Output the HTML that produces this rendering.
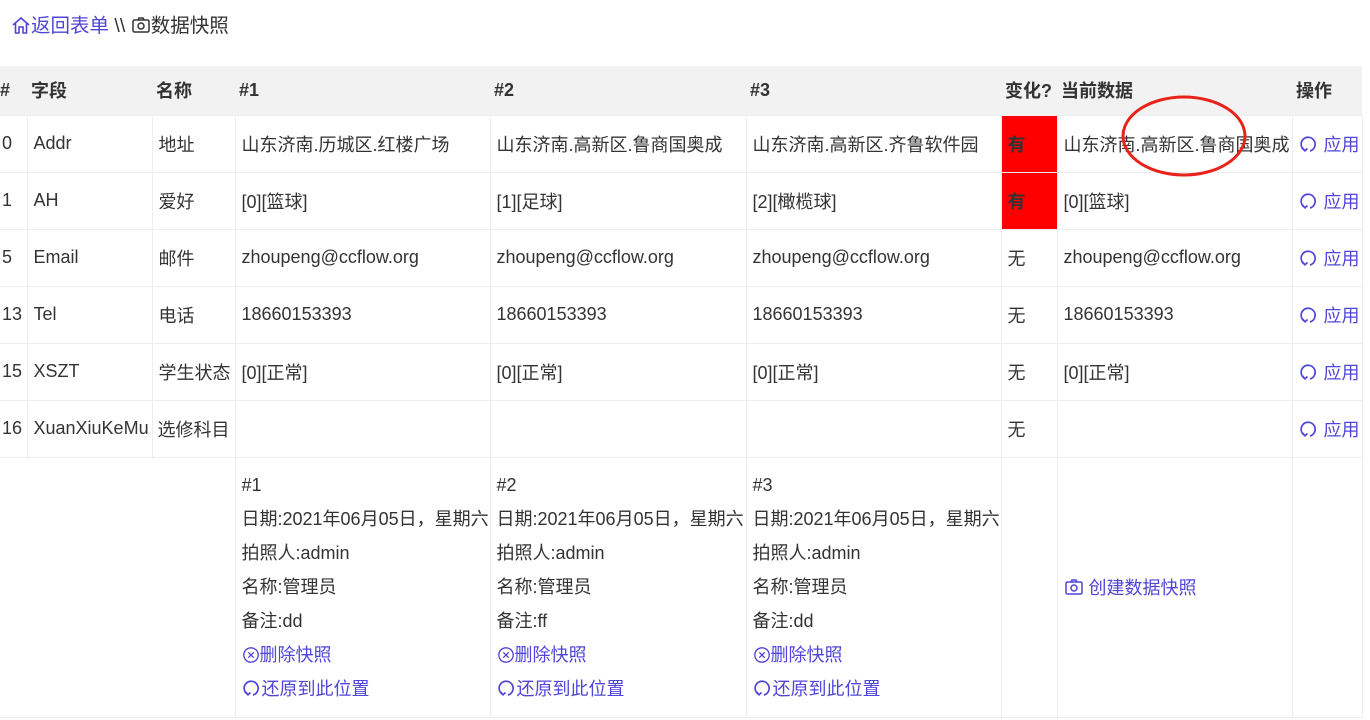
<!DOCTYPE html>
<html><head><meta charset="utf-8">
<style>
*{margin:0;padding:0;box-sizing:border-box}
body{width:1370px;height:720px;background:#fff;font-family:"Liberation Sans","Noto Sans CJK SC",sans-serif;font-size:18px;color:#333;position:relative;overflow:hidden}
.top{position:absolute;left:11px;top:13px;font-size:19.5px;line-height:26px;white-space:nowrap}
a{color:#4f46d8;text-decoration:none}
table{position:absolute;left:0;top:66px;width:1362px;border-collapse:collapse;table-layout:fixed}
th{background:#f2f2f2;height:49px;text-align:left;font-weight:bold;font-size:18px;padding-left:4px;white-space:nowrap}
td{height:57px;border:1px solid #eee;padding-left:6px;white-space:nowrap;overflow:hidden;vertical-align:middle}
td:first-child{padding-left:2px;border-left:none}
.red{background:#ff0000;font-weight:bold}
.snap{vertical-align:top;padding-top:15px}
.snap div{height:34px;line-height:24px}
svg{vertical-align:-3px}
</style></head><body>
<div class="top"><a><svg width="20" height="20" viewBox="0 0 20 20" fill="none" stroke="#4f46d8" stroke-width="1.6"><path d="M2 10 L10 3 L18 10 M4.5 8 V18 H8 V12 H12 V18 H15.5 V8"/></svg>返回表单</a> \\ <svg width="20" height="20" viewBox="0 0 20 20" fill="none" stroke="#333" stroke-width="1.5"><rect x="2" y="5" width="16" height="12" rx="1.5"/><path d="M7 5 L8 3 H12 L13 5"/><circle cx="10" cy="11" r="3"/></svg>数据快照</div>
<table>
<colgroup><col style="width:27px"><col style="width:125px"><col style="width:83px"><col style="width:255px"><col style="width:256px"><col style="width:255px"><col style="width:56px"><col style="width:235px"><col style="width:70px"></colgroup>
<tr><th style="padding-left:0">#</th><th>字段</th><th>名称</th><th>#1</th><th>#2</th><th>#3</th><th>变化?</th><th>当前数据</th><th>操作</th></tr>
<tr><td>0</td><td>Addr</td><td>地址</td><td>山东济南.历城区.红楼广场</td><td>山东济南.高新区.鲁商国奥成</td><td>山东济南.高新区.齐鲁软件园</td><td class="red">有</td><td>山东济南.高新区.鲁商国奥成</td><td><a class="ap"></a></td></tr>
<tr><td>1</td><td>AH</td><td>爱好</td><td>[0][篮球]</td><td>[1][足球]</td><td>[2][橄榄球]</td><td class="red">有</td><td>[0][篮球]</td><td><a class="ap"></a></td></tr>
<tr><td>5</td><td>Email</td><td>邮件</td><td>zhoupeng@ccflow.org</td><td>zhoupeng@ccflow.org</td><td>zhoupeng@ccflow.org</td><td>无</td><td>zhoupeng@ccflow.org</td><td><a class="ap"></a></td></tr>
<tr><td>13</td><td>Tel</td><td>电话</td><td>18660153393</td><td>18660153393</td><td>18660153393</td><td>无</td><td>18660153393</td><td><a class="ap"></a></td></tr>
<tr><td>15</td><td>XSZT</td><td>学生状态</td><td>[0][正常]</td><td>[0][正常]</td><td>[0][正常]</td><td>无</td><td>[0][正常]</td><td><a class="ap"></a></td></tr>
<tr><td>16</td><td>XuanXiuKeMu</td><td style="padding-left:5px">选修科目</td><td></td><td></td><td></td><td>无</td><td></td><td><a class="ap"></a></td></tr>
<tr style="height:260px"><td colspan="3" style="border-left:none"></td>
<td class="snap"><div>#1</div><div>日期:2021年06月05日，星期六</div><div>拍照人:admin</div><div>名称:管理员</div><div>备注:dd</div><div><a><span class="x"></span>删除快照</a></div><div><a><span class="r"></span>还原到此位置</a></div></td>
<td class="snap"><div>#2</div><div>日期:2021年06月05日，星期六</div><div>拍照人:admin</div><div>名称:管理员</div><div>备注:ff</div><div><a><span class="x"></span>删除快照</a></div><div><a><span class="r"></span>还原到此位置</a></div></td>
<td class="snap"><div>#3</div><div>日期:2021年06月05日，星期六</div><div>拍照人:admin</div><div>名称:管理员</div><div>备注:dd</div><div><a><span class="x"></span>删除快照</a></div><div><a><span class="r"></span>还原到此位置</a></div></td>
<td></td><td><a><svg width="20" height="20" viewBox="0 0 20 20" fill="none" stroke="#4f46d8" stroke-width="1.5"><rect x="2" y="5" width="16" height="12" rx="1.5"/><path d="M7 5 L8 3 H12 L13 5"/><circle cx="10" cy="11" r="3"/></svg> 创建数据快照</a></td><td></td></tr>
</table>
<svg style="position:absolute;left:1120px;top:94px" width="130" height="84"><ellipse cx="64" cy="42" rx="61" ry="39" fill="none" stroke="#e8231b" stroke-width="3"/></svg>
<script>
var rf='<svg width="20" height="20" viewBox="0 0 20 20" fill="none" stroke="#4f46d8" stroke-width="1.7"><path d="M6 16.5 A7 7 0 1 1 11 17"/><path d="M3.5 14 L6 16.8 L8.5 14.5"/></svg>';
var xx='<svg width="18" height="18" viewBox="0 0 20 20" fill="none" stroke="#4f46d8" stroke-width="1.5"><circle cx="10" cy="10" r="8"/><path d="M7 7 L13 13 M13 7 L7 13"/></svg>';
document.querySelectorAll('.ap').forEach(function(e){e.innerHTML=rf+' 应用'});
document.querySelectorAll('.r').forEach(function(e){e.outerHTML=rf});
document.querySelectorAll('.x').forEach(function(e){e.outerHTML=xx});
</script>
</body></html>
